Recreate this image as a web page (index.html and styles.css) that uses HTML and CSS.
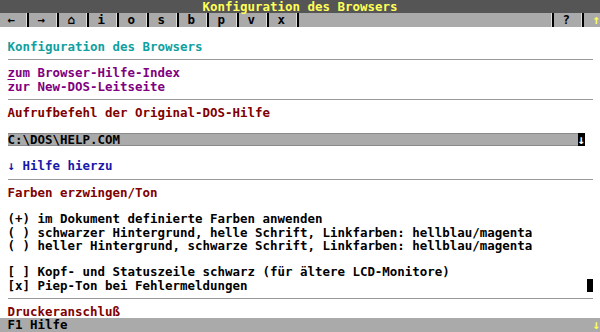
FILE: index.html
```html
<!DOCTYPE html>
<html lang="de">
<head>
<meta charset="utf-8">
<title>Konfiguration des Browsers</title>
<link rel="stylesheet" href="styles.css">
</head>
<body>
<div class="screen">
  <div class="titlebar">Konfiguration des Browsers</div>
  <div class="toolbar">
    <div class="btns">
      <span class="btn">←</span><span class="sep"></span>
      <span class="btn">→</span><span class="sep"></span>
      <span class="btn">⌂</span><span class="sep"></span>
      <span class="btn">i</span><span class="sep"></span>
      <span class="btn">o</span><span class="sep"></span>
      <span class="btn">s</span><span class="sep"></span>
      <span class="btn">b</span><span class="sep"></span>
      <span class="btn">p</span><span class="sep"></span>
      <span class="btn">v</span><span class="sep"></span>
      <span class="btn">x</span><span class="sep"></span>
    </div>
    <div class="btns right">
      <span class="sep"></span><span class="btn">?</span><span class="sep"></span><span class="scroll-up">↑</span>
    </div>
  </div>
  <div class="content">
    <div class="row"></div>
    <div class="row heading-cyan">Konfiguration des Browsers</div>
    <div class="rule"></div>
    <div class="row link"><span class="cursor-ul">z</span>um Browser-Hilfe-Index</div>
    <div class="row link">zur New-DOS-Leitseite</div>
    <div class="rule"></div>
    <div class="row heading-red">Aufrufbefehl der Original-DOS-Hilfe</div>
    <div class="row"></div>
    <div class="row field-row">
      <span class="field">C:\DOS\HELP.COM</span><span class="field-btn">↓</span>
    </div>
    <div class="row"></div>
    <div class="row help-link">↓ Hilfe hierzu</div>
    <div class="rule"></div>
    <div class="row heading-red">Farben erzwingen/Ton</div>
    <div class="row"></div>
    <div class="row">(+) im Dokument definierte Farben anwenden</div>
    <div class="row">( ) schwarzer Hintergrund, helle Schrift, Linkfarben: hellblau/magenta</div>
    <div class="row">( ) heller Hintergrund, schwarze Schrift, Linkfarben: hellblau/magenta</div>
    <div class="row"></div>
    <div class="row">[ ] Kopf- und Statuszeile schwarz (für ältere LCD-Monitore)</div>
    <div class="row with-cursor"><span>[x] Piep-Ton bei Fehlermeldungen</span><span class="block-cursor"></span></div>
    <div class="rule"></div>
    <div class="row heading-red">Druckeranschluß</div>
  </div>
  <div class="statusbar"><span>F1 Hilfe</span><span class="scroll-down">↓</span></div>
</div>
</body>
</html>
```
FILE: styles.css
```css
:root {
  --ch: 7.5px;
  --row: 13.28px;
}

html, body {
  margin: 0;
  padding: 0;
  background: #ffffff;
}

.screen {
  width: 600px;
  height: 332px;
  overflow: hidden;
  font-family: "DejaVu Sans Mono", "Liberation Mono", monospace;
  font-size: 12.46px;
  font-weight: bold;
  line-height: var(--row);
  white-space: nowrap;
  color: #000000;
  background: #ffffff;
}

.titlebar {
  height: var(--row);
  background: #555555;
  color: #ffff55;
  text-align: center;
}

.toolbar {
  height: var(--row);
  background: #aaaaaa;
  display: flex;
  justify-content: space-between;
}

.btns {
  display: flex;
  height: 100%;
}

.btn {
  width: calc(var(--ch) * 3);
  text-align: center;
}

.sep {
  width: var(--ch);
  height: 100%;
  display: flex;
  justify-content: flex-end;
}

.sep::before {
  content: "";
  width: 1px;
  background: #dddddd;
}

.sep::after {
  content: "";
  width: 2.5px;
  margin-right: 1px;
  background: #000000;
}

.scroll-up {
  width: calc(var(--ch) * 2);
  text-align: right;
  color: #ffff55;
}

.content {
  display: flex;
  flex-direction: column;
}

.row {
  height: var(--row);
  padding-left: var(--ch);
}

.rule {
  height: var(--row);
  padding: 0 var(--ch);
  display: flex;
  align-items: center;
}

.rule::before {
  content: "";
  flex: 1;
  height: 1px;
  background: #999999;
}

.heading-cyan {
  color: #10a0a0;
}

.heading-red {
  color: #800000;
}

.link {
  color: #800080;
}

.cursor-ul {
  text-decoration: underline;
  text-underline-offset: 2px;
}

.help-link {
  color: #1818a8;
}

.field-row {
  display: flex;
}

.field {
  width: calc(var(--ch) * 76);
  box-sizing: border-box;
  background: #aaaaaa;
  border-top: 1px solid #8a8a8a;
  border-bottom: 1px solid #8a8a8a;
  line-height: calc(var(--row) - 2px);
  color: #000000;
}

.field-btn {
  width: var(--ch);
  background: #000000;
  color: #ffffff;
  text-align: center;
}

.with-cursor {
  display: flex;
  padding-right: var(--ch);
}

.block-cursor {
  margin-left: auto;
  width: 6px;
  background: #000000;
}

.statusbar {
  height: var(--row);
  background: #aaaaaa;
  padding-left: var(--ch);
  display: flex;
  justify-content: space-between;
}

.scroll-down {
  width: var(--ch);
  text-align: center;
  color: #ffff55;
}
```
